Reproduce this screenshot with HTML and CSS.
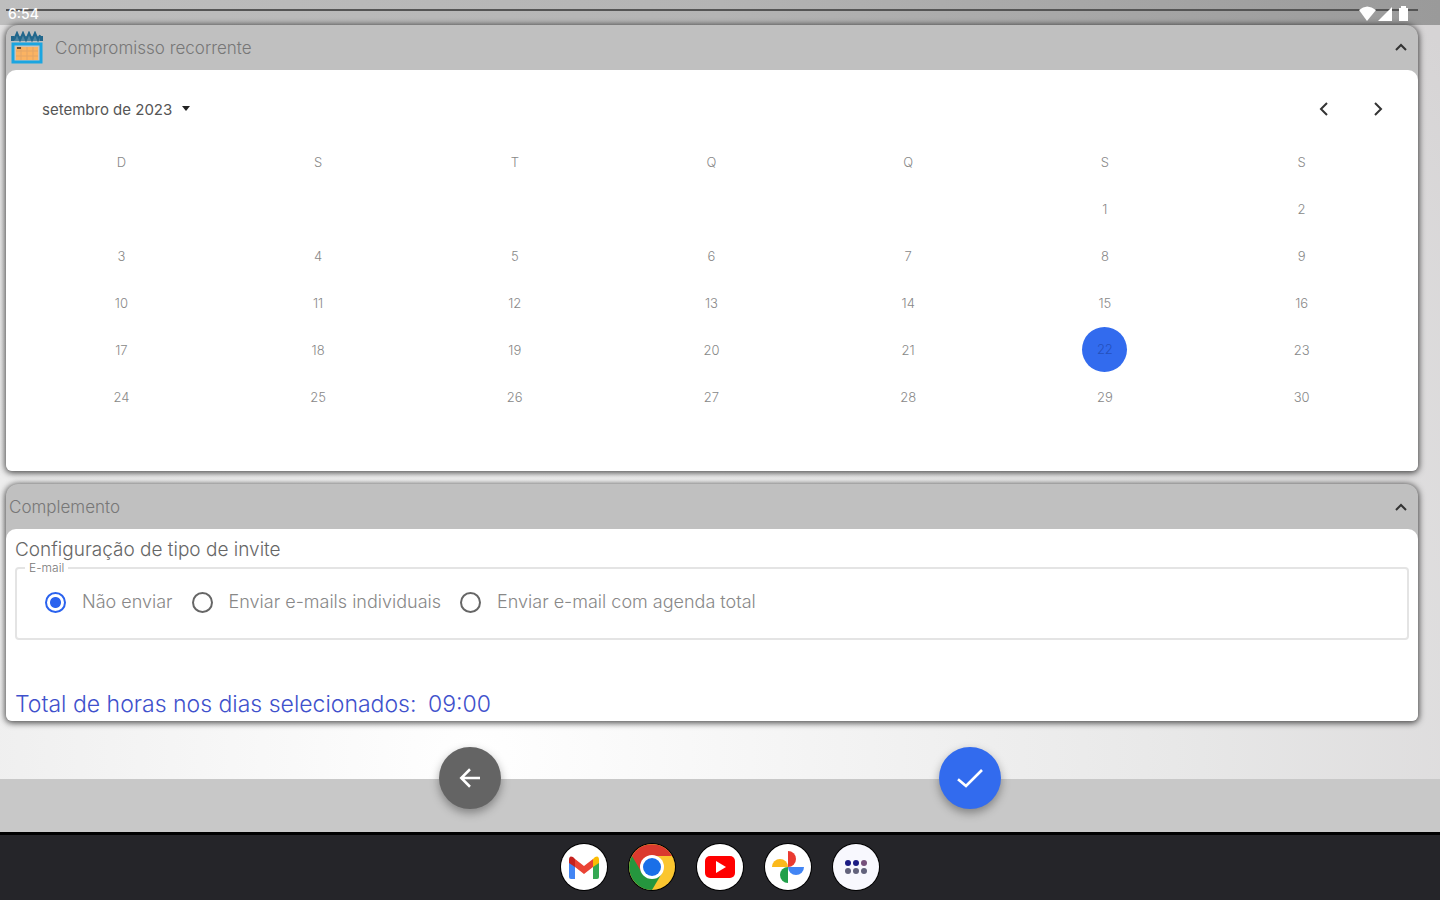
FILE: index.html
```html
<!DOCTYPE html>
<html lang="pt-BR">
<head>
<meta charset="utf-8">
<meta name="viewport" content="width=device-width, initial-scale=1">
<title>Compromisso recorrente</title>
<link rel="stylesheet" href="styles.css">
</head>
<body>
  <header class="status-bar">
    <span class="clock">6:54</span>
    <svg class="status-icons" viewBox="0 0 54 18" width="54" height="18" aria-hidden="true">
      <path d="M1 6 Q9 -1 18 6 L9 17 Z"/>
      <path d="M34 3 V17 H20 Z"/>
      <path d="M41 4 h2 V2 h5 v2 h2 V17 H41 Z"/>
    </svg>
  </header>

  <main class="content">
    <section class="card">
      <button type="button" class="card-header">
        <svg class="calendar-icon" viewBox="0 0 32 34" width="32" height="34" aria-hidden="true">
          <path d="M0 5 H32 V10 H0 Z" fill="#4d84a0"/>
          <path d="M0 5 H3 V10 H0 Z M29 5 H32 V10 H29 Z" fill="#22678c"/>
          <path d="M3 9 L6 2 L9 9 L12 2 L15 9 L18 2 L21 9 L24 2 L27 9 L29 4" fill="none" stroke="#22678c" stroke-width="2"/>
          <rect x="2" y="13" width="28" height="18" fill="#c9c4be" stroke="#1ba5e0" stroke-width="3"/>
          <rect x="5" y="16" width="22" height="13" fill="#fbb362"/>
          <path d="M5 20 H27 M5 25 H27 M10 16 V29 M16 16 V29 M22 16 V29" stroke="#e3a567" stroke-width="1"/>
          <rect x="6" y="16" width="4" height="2" fill="#6b4a2a"/>
        </svg>
        <span class="card-title">Compromisso recorrente</span>
        <svg class="chevron" viewBox="0 0 14 10" width="14" height="10" aria-hidden="true"><path d="M2 7 L7 2 L12 7"/></svg>
      </button>
      <div class="card-body calendar">
        <div class="calendar-bar">
          <button type="button" class="month-btn">setembro de 2023
            <svg viewBox="0 0 10 6" width="10" height="6" aria-hidden="true"><path d="M1 0 H9 L5 5 Z" fill="#222"/></svg>
          </button>
          <div class="month-nav">
            <button type="button" aria-label="Mês anterior"><svg viewBox="0 0 12 16" width="12" height="16"><path d="M9 2 L3 8 L9 14"/></svg></button>
            <button type="button" aria-label="Próximo mês"><svg viewBox="0 0 12 16" width="12" height="16"><path d="M3 2 L9 8 L3 14"/></svg></button>
          </div>
        </div>
        <table class="days">
          <thead>
            <tr><th>D</th><th>S</th><th>T</th><th>Q</th><th>Q</th><th>S</th><th>S</th></tr>
          </thead>
          <tbody>
            <tr><td></td><td></td><td></td><td></td><td></td><td>1</td><td>2</td></tr>
            <tr><td>3</td><td>4</td><td>5</td><td>6</td><td>7</td><td>8</td><td>9</td></tr>
            <tr><td>10</td><td>11</td><td>12</td><td>13</td><td>14</td><td>15</td><td>16</td></tr>
            <tr><td>17</td><td>18</td><td>19</td><td>20</td><td>21</td><td><span class="selected">22</span></td><td>23</td></tr>
            <tr><td>24</td><td>25</td><td>26</td><td>27</td><td>28</td><td>29</td><td>30</td></tr>
          </tbody>
        </table>
      </div>
    </section>

    <section class="card">
      <button type="button" class="card-header plain">
        <span class="card-title">Complemento</span>
        <svg class="chevron" viewBox="0 0 14 10" width="14" height="10" aria-hidden="true"><path d="M2 8 L7 3 L12 8"/></svg>
      </button>
      <div class="card-body extra">
        <h2 class="subtitle">Configuração de tipo de invite</h2>
        <fieldset class="email-options">
          <legend>E-mail</legend>
          <label><input type="radio" name="email" value="none" checked>Não enviar</label>
          <label><input type="radio" name="email" value="single">Enviar e-mails individuais</label>
          <label><input type="radio" name="email" value="full">Enviar e-mail com agenda total</label>
        </fieldset>
        <p class="total">Total de horas nos dias selecionados: <span>09:00</span></p>
      </div>
    </section>
  </main>

  <div class="actions">
    <button type="button" class="fab back" aria-label="Voltar">
      <svg viewBox="0 0 24 24" width="30" height="30"><path d="M20 12 H5 M12 5 L5 12 L12 19"/></svg>
    </button>
    <button type="button" class="fab confirm" aria-label="Confirmar">
      <svg viewBox="0 0 24 24" width="32" height="32"><path d="M3 13 L9 18 L21 6"/></svg>
    </button>
  </div>

  <nav class="dock">
    <a href="#" aria-label="Gmail">
      <svg viewBox="0 0 46 46" width="46" height="46">
        <circle cx="23" cy="23" r="23" fill="#fff"/>
        <path d="M8 17 L14 21 V35 H10 Q8 35 8 33 Z" fill="#4285f4"/>
        <path d="M38 17 L32 21 V35 H36 Q38 35 38 33 Z" fill="#34a853"/>
        <path d="M32 15 L34 13 Q38 11 38 16 V19 L32 23 Z" fill="#fbbc04"/>
        <path d="M14 15 L12 13 Q8 11 8 16 V19 L14 23 Z" fill="#c5221f"/>
        <path d="M14 15 L23 22 L32 15 V23 L23 30 L14 23 Z" fill="#ea4335"/>
      </svg>
    </a>
    <a href="#" aria-label="Chrome">
      <svg viewBox="0 0 46 46" width="46" height="46">
        <circle cx="23" cy="23" r="23" fill="#fbc62f"/>
        <path d="M23 23 L3 12 A23 23 0 0 0 23 46 L33 29 Z" fill="#25963e"/>
        <path d="M23 12 H43 A23 23 0 0 0 3 12 L13 29 Z" fill="#db3a2e"/>
        <circle cx="23" cy="23" r="12" fill="#fff"/>
        <circle cx="23" cy="23" r="9" fill="#1a6fe8"/>
      </svg>
    </a>
    <a href="#" aria-label="YouTube">
      <svg viewBox="0 0 46 46" width="46" height="46">
        <circle cx="23" cy="23" r="23" fill="#fff"/>
        <rect x="8" y="12" width="30" height="22" rx="5" fill="#f00"/>
        <path d="M19 17 L29 23 L19 29 Z" fill="#fff"/>
      </svg>
    </a>
    <a href="#" aria-label="Fotos">
      <svg viewBox="0 0 46 46" width="46" height="46">
        <circle cx="23" cy="23" r="23" fill="#fff"/>
        <path d="M23 23 V7 A8 8 0 0 1 23 23 Z" fill="#ea3a30"/>
        <path d="M23 23 H39 A8 8 0 0 1 23 23 Z" fill="#4285f4"/>
        <path d="M23 23 V39 A8 8 0 0 1 23 23 Z" fill="#21a04a"/>
        <path d="M23 23 H7 A8 8 0 0 1 23 23 Z" fill="#fbb91c"/>
      </svg>
    </a>
    <a href="#" aria-label="Aplicativos">
      <svg viewBox="0 0 46 46" width="46" height="46">
        <circle cx="23" cy="23" r="23" fill="#f8f8fe"/>
        <g fill="#1c1c84">
          <circle cx="15" cy="19" r="3"/><circle cx="23" cy="19" r="3"/>
        </g>
        <circle cx="31" cy="19" r="3" fill="#76507c"/>
        <g fill="#62627c">
          <circle cx="15" cy="27" r="3"/><circle cx="23" cy="27" r="3"/><circle cx="31" cy="27" r="3"/>
        </g>
      </svg>
    </a>
  </nav>
</body>
</html>
```
FILE: styles.css
```css
* {
    box-sizing: border-box;
}

body {
    font-family: Inter, "Liberation Sans", sans-serif;
    font-weight: 300;
    margin: 0;
    min-height: 100vh;
    display: flex;
    flex-direction: column;
    color: #777;
    background: radial-gradient(circle at 33% 84%, #fff 0, #e8e8e8 700px, #d6d4d5 1200px);
}

button {
    font: inherit;
    color: inherit;
    border: none;
    background: none;
    padding: 0;
    cursor: pointer;
}

svg {
    display: block;
}

.status-bar {
    height: 25px;
    padding: 4px 28px 0 8px;
    display: flex;
    justify-content: space-between;
    background: linear-gradient(to right, #bebebe, #b4b4b4 50%, #9a9a9a);
}

/* thin rule running behind the clock and the icons */
.status-bar::before {
    content: "";
    position: absolute;
    left: 6px;
    right: 22px;
    top: 9px;
    height: 2px;
    background-color: #555;
}

.clock {
    position: relative;
    color: #fff;
    font-size: 14px;
    line-height: 20px;
    font-weight: 500;
}

.status-icons {
    position: relative;
    fill: #fff;
}

.content {
    flex: 1;
    padding: 0 22px 0 6px;
    display: flex;
    flex-direction: column;
    gap: 13px;
}

.card {
    background-color: #c0c0c0;
    border-radius: 12px 12px 6px 6px;
    box-shadow: 0 1px 6px 1px rgba(0, 0, 0, 0.7);
}

.card-header {
    width: 100%;
    height: 45px;
    padding: 0 10px 0 5px;
    display: flex;
    align-items: center;
    gap: 12px;
    font-size: 17px;
    text-align: left;
}

.card-header.plain {
    padding-left: 3px;
}

.card-title {
    flex: 1;
}

.chevron,
.month-nav svg {
    fill: none;
    stroke: #333;
    stroke-width: 2;
}

.card-body {
    background-color: #fff;
    border-radius: 10px 10px 6px 6px;
}

.calendar {
    padding: 10px 18px 51px 17px;
}

.calendar-bar {
    display: flex;
    justify-content: space-between;
    align-items: center;
    height: 58px;
    padding: 0 16px 0 19px;
}

.month-btn {
    display: flex;
    align-items: center;
    gap: 9px;
    font-size: 15px;
    font-weight: 400;
    color: #555;
}

.month-nav {
    display: flex;
    gap: 42px;
}

.days {
    width: 100%;
    table-layout: fixed;
    border-collapse: collapse;
    font-size: 13px;
}

.days th,
.days td {
    height: 47px;
    padding: 0;
    text-align: center;
    font-weight: 300;
    color: #888;
}

.selected {
    display: block;
    width: 45px;
    margin: 0 auto;
    line-height: 45px;
    border-radius: 50%;
    background-color: #326bee;
    color: #2450bd;
}

.extra {
    padding: 9px 9px 2px;
}

.subtitle {
    margin: 0;
    font-size: 19px;
    line-height: 24px;
    font-weight: 300;
    color: #666;
}

.email-options {
    margin: 0;
    padding: 17px 28px 25px;
    min-width: 0;
    display: flex;
    flex-wrap: wrap;
    gap: 19px;
    border: 2px solid #e4e4e4;
    border-radius: 4px;
}

.email-options legend {
    margin-left: -20px;
    padding: 0 4px;
    font-size: 12px;
    line-height: 12px;
}

.email-options label {
    display: flex;
    align-items: center;
    gap: 16px;
    font-size: 18px;
    line-height: 22px;
    color: #888;
}

.email-options input {
    appearance: none;
    width: 21px;
    height: 21px;
    margin: 0;
    border: 2px solid #666;
    border-radius: 50%;
}

.email-options input:checked {
    border-color: #2a62ee;
    background: radial-gradient(circle, #2a62ee 5px, transparent 6px);
}

.total {
    margin: 49px 0 0;
    font-size: 23px;
    line-height: 30px;
    color: #3f51cc;
}

.total span {
    margin-left: 5px;
}

/* lower half of the buttons sits on the grey strip */
.actions {
    display: flex;
    justify-content: space-evenly;
    padding: 26px 0 23px;
    background: linear-gradient(transparent 58px, #c8c8c8 58px);
}

.fab {
    width: 62px;
    height: 62px;
    display: flex;
    justify-content: center;
    align-items: center;
    border-radius: 50%;
    box-shadow: 0 4px 10px rgba(0, 0, 0, 0.35);
}

.fab svg {
    fill: none;
    stroke: #fff;
    stroke-width: 2;
}

.back {
    background-color: #646464;
}

.confirm {
    background-color: #326bee;
}

.dock {
    display: flex;
    justify-content: center;
    gap: 22px;
    padding: 9px 0 10px;
    border-top: 3px solid #000;
    background-color: #252529;
}

.dock a {
    border-radius: 50%;
    box-shadow: 0 0 0 1px #000;
}
```
